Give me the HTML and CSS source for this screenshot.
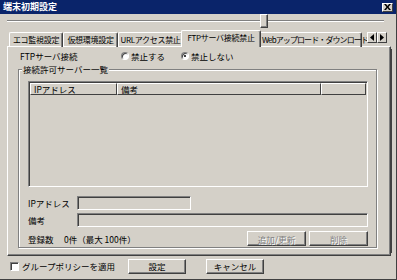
FILE: index.html
```html
<!DOCTYPE html>
<html lang="ja">
<head>
<meta charset="utf-8">
<link rel="stylesheet" href="styles.css">
</head>
<body>
<div class="window">
  <div class="titlebar">
    <span class="title">端末初期設定</span>
    <span class="close"><svg width="7" height="6" viewBox="0 0 7 6"><path d="M0 0h2l1.5 2L5 0h2L4.5 3 7 6H5L3.5 4 2 6H0l2.5-3z" fill="#000"/></svg></span>
  </div>
  <div class="slider">
    <div class="track"></div>
    <div class="thumb"></div>
  </div>
  <div class="tabrow">
    <div class="tabs">
      <div class="tab t1">エコ監視設定</div>
      <div class="tab t2">仮想環境設定</div>
      <div class="tab t3">URLアクセス禁止</div>
      <div class="tab t4 active">FTPサーバ接続禁止</div>
      <div class="tab t5">Webアップロード・ダウンロード</div>
    </div>
    <div class="arrows">
      <span class="arr"><svg width="4" height="7" viewBox="0 0 4 7"><path d="M4 0v7L0 3.5z" fill="#000"/></svg></span>
      <span class="arr"><svg width="4" height="7" viewBox="0 0 4 7"><path d="M0 0v7l4-3.5z" fill="#000"/></svg></span>
    </div>
  </div>
  <div class="panel">
    <div class="ftprow">
      <span class="ftplabel">FTPサーバ接続</span>
      <span class="radio r1"><span class="dot"></span>禁止する</span>
      <span class="radio r2"><span class="dot on"></span>禁止しない</span>
    </div>
    <div class="group">
      <span class="legend">接続許可サーバー一覧</span>
      <div class="list">
        <div class="lhead">
          <span class="col c1">IPアドレス</span>
          <span class="col c2">備考</span>
          <span class="col c3"></span>
        </div>
      </div>
      <div class="frow f1">
        <span class="flabel">IPアドレス</span>
        <span class="input w1"></span>
      </div>
      <div class="frow f2">
        <span class="flabel">備考</span>
        <span class="input w2"></span>
      </div>
      <div class="frow f3">
        <span class="flabel">登録数</span>
        <span class="count">0件（最大 100件）</span>
        <span class="spacer"></span>
        <span class="btn dis b1">追加/更新</span>
        <span class="btn dis b2">削除</span>
      </div>
    </div>
  </div>
  <div class="bottom">
    <span class="check"></span>
    <span class="chklabel">グループポリシーを適用</span>
    <span class="btn b3">設定</span>
    <span class="btn b4">キャンセル</span>
  </div>
</div>
</body>
</html>
```
FILE: styles.css
```css
* { box-sizing: border-box; }
html, body { margin: 0; padding: 0; background: #d4d0c8; }
body { font-family: "Noto Sans CJK JP", "Noto Sans", sans-serif; font-size: 8.5px; color: #000; }
.window {
  width: 397px; height: 280px; background: #d4d0c8;
  border-right: 1px solid #404040; border-bottom: 1px solid #404040;
  display: flex; flex-direction: column;
}
.titlebar {
  height: 14px; background: #0a246a; color: #fff;
  display: flex; align-items: center; padding-left: 3px; padding-right: 3px;
}
.title { font-weight: bold; font-size: 9px; line-height: 14px; flex: 1; }
.close {
  width: 11px; height: 9px; background: #d4d0c8;
  border-top: 1px solid #fff; border-left: 1px solid #fff;
  border-right: 1px solid #404040; border-bottom: 1px solid #404040;
  display: flex; align-items: center; justify-content: center;
}
.slider { position: relative; height: 16px; margin: 0 12px 0 7px; }
.track {
  margin-top: 6px; height: 2px;
  border-top: 1px solid #808080; border-bottom: 1px solid #fff;
}
.thumb {
  position: absolute; left: 253px; top: 0; width: 8px; height: 14px; background: #d4d0c8;
  border-top: 1px solid #fff; border-left: 1px solid #fff;
  border-right: 1px solid #404040; border-bottom: 1px solid #404040;
  box-shadow: inset -1px -1px #808080;
}
.tabrow { height: 17px; display: flex; align-items: flex-start; position: relative; z-index: 2; }
.tabs { width: 367px; display: flex; align-items: flex-end; padding-left: 9px; overflow: hidden; height: 17px; }
.tab {
  flex: none; height: 15px; line-height: 13px; text-align: center; white-space: nowrap;
  font-size: 8px; letter-spacing: -0.3px;
  border-top: 1px solid #fff; border-left: 1px solid #fff; border-right: 1px solid #404040;
  box-shadow: inset -1px 0 #808080; border-radius: 2px 2px 0 0; padding: 0 1px;
}
.t1 { width: 54px; }
.t2 { width: 55px; }
.t3 { width: 65px; }
.t4 { width: 80px; }
.t5 { width: 103px; text-align: left; padding-left: 2px; letter-spacing: -0.9px; }
.tab.active { height: 17px; margin: 0 -2px; position: relative; background: #d4d0c8; line-height: 14px; }
.arrows { display: flex; margin-top: 2px; }
.arr {
  width: 10px; height: 11px; background: #d4d0c8; display: flex; align-items: center; justify-content: center;
  border-top: 1px solid #fff; border-left: 1px solid #fff;
  border-right: 1px solid #404040; border-bottom: 1px solid #404040;
}
.panel {
  margin-left: 7px; width: 384px; height: 210px; margin-top: -1px;
  border-top: 1px solid #fff; border-left: 1px solid #fff;
  border-right: 1px solid #404040; border-bottom: 1px solid #404040;
  box-shadow: inset -1px -1px #808080, 4px 0 0 -3px #404040;
  display: flex; flex-direction: column;
}
.ftprow { display: flex; align-items: center; height: 14px; margin-top: 2px; padding-left: 12px; }
.ftplabel { width: 101px; }
.radio { display: flex; align-items: center; gap: 2px; }
.r1 { width: 60px; }
.dot {
  width: 8px; height: 8px; border-radius: 50%; background: #fff;
  border: 1px solid #808080; border-right-color: #fff; border-bottom-color: #fff;
  box-shadow: inset 1px 1px #404040; position: relative;
}
.dot.on::after {
  content: ""; position: absolute; left: 2px; top: 2px; width: 2px; height: 2px; background: #000; border-radius: 50%;
}
.group {
  margin: 6px 0 0 10px; width: 359px; height: 179px; position: relative;
  border: 1px solid #808080; box-shadow: inset 1px 1px #fff, 1px 1px #fff;
  padding: 11px 8px 0 9px; display: flex; flex-direction: column;
}
.legend { position: absolute; left: 3px; top: -7px; background: #d4d0c8; padding: 0 1px; line-height: 12px; }
.list {
  height: 106px; width: 340px;
  border: 1px solid #808080; border-right-color: #fff; border-bottom-color: #fff;
  box-shadow: inset 1px 1px #404040;
  padding: 1px;
}
.lhead { display: flex; height: 12px; }
.col {
  height: 12px; line-height: 10px; padding-left: 3px; white-space: nowrap;
  border-top: 1px solid #fff; border-left: 1px solid #fff;
  border-right: 1px solid #404040; border-bottom: 1px solid #404040;
}
.c1 { width: 87px; }
.c2 { width: 204px; }
.c3 { flex: 1; }
.frow { display: flex; align-items: center; }
.f1 { margin-top: 9px; height: 14px; }
.f2 { margin-top: 3px; height: 14px; }
.f3 { margin-top: 4px; height: 15px; }
.flabel { width: 49px; }
.input {
  height: 14px; background: #d4d0c8;
  border: 1px solid #808080; border-right-color: #fff; border-bottom-color: #fff;
  box-shadow: inset 1px 1px #404040;
}
.w1 { width: 114px; }
.w2 { width: 291px; }
.count { margin-left: -13px; }
.spacer { flex: 1; }
.btn {
  display: flex; align-items: center; justify-content: center; background: #d4d0c8;
  border-top: 1px solid #fff; border-left: 1px solid #fff;
  border-right: 1px solid #404040; border-bottom: 1px solid #404040;
  box-shadow: inset -1px -1px #808080;
}
.dis { color: #808080; text-shadow: 1px 1px #fff; }
.b1 { width: 59px; height: 15px; }
.b2 { width: 59px; height: 15px; margin-left: 3px; }
.bottom { display: flex; align-items: center; height: 16px; margin-top: 2px; padding-left: 10px; }
.check {
  width: 9px; height: 9px; background: #fff;
  border: 1px solid #808080; border-right-color: #fff; border-bottom-color: #fff;
  box-shadow: inset 1px 1px #404040;
}
.chklabel { margin-left: 3px; width: 106px; }
.b3 { width: 58px; height: 15px; }
.b4 { width: 58px; height: 15px; margin-left: 20px; }
```
